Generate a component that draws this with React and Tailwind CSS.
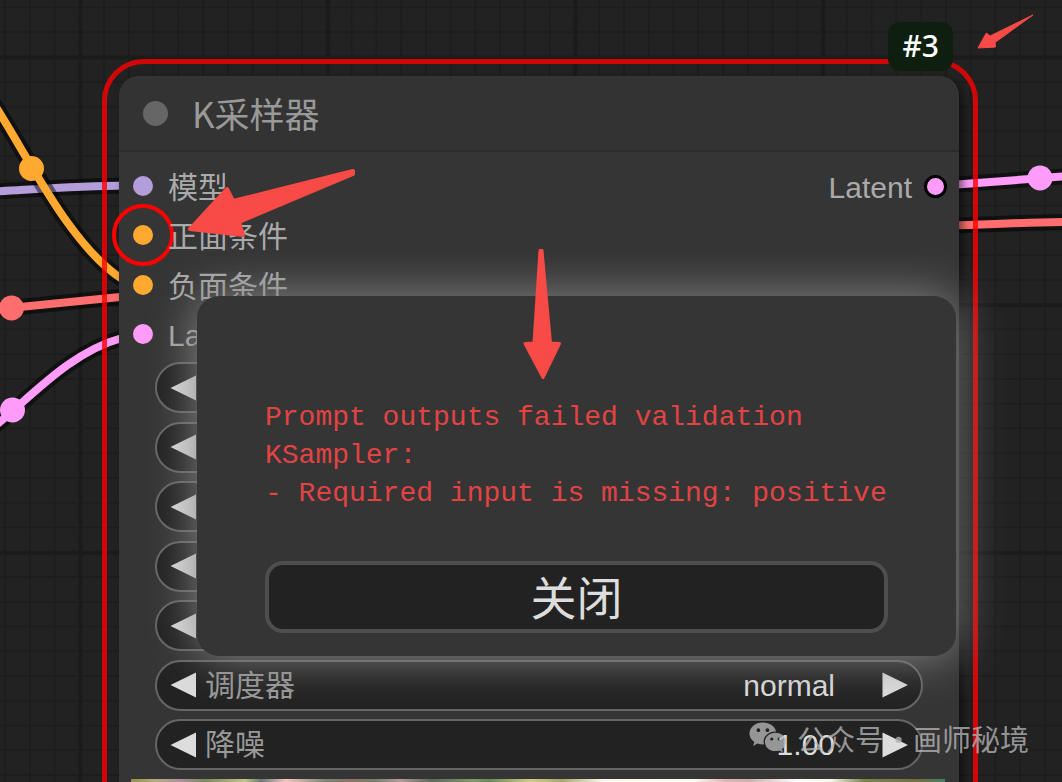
import React from "react";

const SANS = "font-['Liberation_Sans','Noto_Sans_CJK_SC',sans-serif]";
const CJK = "font-['Noto_Sans_CJK_SC',sans-serif]";

function Link({ d, color }) {
  return (
    <g fill="none">
      <path d={d} stroke="#000" strokeOpacity="0.5" strokeWidth="16" />
      <path d={d} stroke={color} strokeWidth="8" />
    </g>
  );
}

function CanvasBackdrop() {
  return (
    <svg className="absolute inset-0 h-full w-full" aria-hidden="true">
      <defs>
        <pattern id="minor" width="24.76" height="24.76" x="4" y="6.5" patternUnits="userSpaceOnUse">
          <path d="M0 1H25M1 0V25" stroke="#1d1d1d" strokeWidth="2" />
        </pattern>
        <pattern id="major" width="247.6" height="247.6" x="78" y="55.5" patternUnits="userSpaceOnUse">
          <path d="M0 2H248M2.5 0V248" stroke="#1b1b1b" strokeWidth="4" />
        </pattern>
      </defs>
      <rect width="100%" height="100%" fill="#222222" />
      <rect width="100%" height="100%" fill="url(#minor)" />
      <rect width="100%" height="100%" fill="url(#major)" />
      <Link d="M-5 191.5C40 189 80 186 125 185.5" color="#b39ddb" />
      <Link d="M-6 309.5L125 296.5" color="#ff6e6e" />
      <Link d="M-6 104C30 160 70 245 122 279" color="#ffa931" />
      <Link d="M-5 426C30 398 70 352 122 338" color="#ff9cf9" />
      <Link d="M950 185L1070 176" color="#ff9cf9" />
      <Link d="M950 225.5C990 224.5 1030 222 1070 222" color="#ff6e6e" />
      <circle cx="31.5" cy="168.5" r="12.5" fill="#ffa931" />
      <circle cx="11.5" cy="308" r="12.5" fill="#ff6e6e" />
      <circle cx="12.5" cy="410" r="12.5" fill="#ff9cf9" />
      <circle cx="1040" cy="178" r="12.5" fill="#ff9cf9" />
    </svg>
  );
}

function Slot({ label, dot, marked }) {
  return (
    <li className="flex flex-1 items-center gap-[15px]">
      <span className={"relative size-5 rounded-full " + dot}>
        {marked && <span className="absolute -inset-[21px] rounded-full border-4 border-[#ff0000]" />}
      </span>
      <span className="relative pt-1 leading-10">{label}</span>
    </li>
  );
}

function Triangle({ d }) {
  return (
    <svg viewBox="0 0 26 26" className="block size-[26px]" fill="#dddddd" aria-hidden="true">
      <path d={d} />
    </svg>
  );
}

function Widget({ label, value }) {
  return (
    <div className="flex h-[51px] items-center rounded-full border-2 border-[#666666] bg-[#222222] px-[13px]">
      <button type="button" aria-label="Previous">
        <Triangle d="M0.5 13L26 0.5V25.5Z" />
      </button>
      <span className="ml-[9px] flex-1 text-[#999999]">{label}</span>
      <span className="mr-[47px] text-[#dddddd]">{value}</span>
      <button type="button" aria-label="Next">
        <Triangle d="M0.5 0.5L26 13L0.5 25.5Z" />
      </button>
    </div>
  );
}

function SamplerNode() {
  return (
    <section className="absolute left-[119px] top-[76px] h-[760px] w-[840px]">
      <div className="h-full rounded-[20px] bg-[#353535] shadow-[4px_4px_8px_rgba(0,0,0,0.5)]">
        <header className="flex h-[76px] items-center gap-6 rounded-t-[20px] border-b-2 border-[#2b2b2b] bg-[#333333] pl-6">
          <span className="size-[25px] rounded-full bg-[#666666]" />
          <h1 className={"text-[35px] leading-[52px] text-[#999999] " + CJK}>K采样器</h1>
        </header>
        <div className={"text-[30px] text-[#aaaaaa] " + SANS}>
          <div className="flex h-[207px] justify-between pl-[14px] pr-3 pt-[9px]">
            <ul className="flex flex-col">
              <Slot label="模型" dot="bg-[#b39ddb]" />
              <Slot label="正面条件" dot="bg-[#ffa931]" marked />
              <Slot label="负面条件" dot="bg-[#ffa931]" />
              <Slot label="Latent" dot="bg-[#ff9cf9]" />
            </ul>
            <div className="flex h-[50px] items-center gap-3">
              <span className="pt-1 leading-10">Latent</span>
              <span className="size-[23px] rounded-full border-[3px] border-black bg-[#ff9cf9]" />
            </div>
          </div>
          <div className="mx-9 mt-[3px] flex h-[408px] flex-col justify-between">
            <Widget />
            <Widget />
            <Widget />
            <Widget />
            <Widget />
            <Widget label="调度器" value="normal" />
            <Widget label="降噪" value="1.00" />
          </div>
          <div className="ml-3 mr-[14px] mt-[9px] h-14 bg-[linear-gradient(90deg,#94904e_0%,#b5ad7c_3%,#b0919b_6%,#7d8860_9%,#c2c487_14%,#6a7a74_16%,#f4c4bb_19%,#7a8573_24%,#8e7164_27%,#77806c_30%,#b79a9c_33%,#5c6b58_37%,#82996a_42%,#6b8a5c_44%,#cfcc80_49%,#a7a76c_53%,#fdf8ec_58%,#fffdf2_69%,#dfb5b4_73%,#cfb0ac_76%,#ffffff_82%,#f7f7e8_86%,#7c8450_90%,#6f6f40_97%,#40805f_100%)]" />
        </div>
      </div>
      <div className="pointer-events-none absolute -left-[17px] -right-[19px] -top-[17px] bottom-0 rounded-[42px] border-[5px] border-[rgba(255,0,0,0.8)]" />
      <span className="absolute -top-[54px] right-[6px] rounded-[12px] bg-[#0f1f0f] px-[14px] pb-[5px] pt-[3px] font-['Noto_Sans',sans-serif] text-[30px] font-medium leading-[41px] text-white">
        #3
      </span>
    </section>
  );
}

function ErrorDialog() {
  return (
    <div
      role="alertdialog"
      aria-labelledby="validation-message"
      className="absolute left-[197px] top-[296px] flex w-[759px] flex-col gap-12 rounded-[22px] bg-[#353535] px-[68px] pb-[23px] pt-[103px] shadow-[0_0_48px_#888888]"
    >
      <p
        id="validation-message"
        className="whitespace-pre font-['Liberation_Mono',monospace] text-[28px] leading-[38px] text-[#e24343]"
      >
        {"Prompt outputs failed validation\nKSampler:\n- Required input is missing: positive"}
      </p>
      <button
        type="button"
        className={
          "h-[72px] rounded-[18px] border-4 border-[#4e4e4e] bg-[#222222] pb-1 text-[46px] leading-[60px] text-[#dddddd] " + CJK
        }
      >
        关闭
      </button>
    </div>
  );
}

function Arrows() {
  return (
    <svg
      className="pointer-events-none absolute inset-0 h-full w-full"
      fill="#f84a46"
      stroke="#f84a46"
      strokeLinejoin="round"
      aria-hidden="true"
    >
      <path strokeWidth="4" d="M190 229L227 189L233 201L353 171L353 174L239 222L243 235Z" />
      <path strokeWidth="3" d="M540 250.5L542 250.5L550.5 343L559.5 343.5L543 377.5L525 343.5L534 343Z" />
      <path strokeWidth="1" d="M978 48L986.3 33L990 36L1033 15L995 42.500L995.5 47Z" />
    </svg>
  );
}

function Watermark() {
  return (
    <div
      className={
        "pointer-events-none absolute bottom-6 right-[33px] flex items-center text-[29px] leading-10 text-[#b4b4b4]/80 " + CJK
      }
    >
      <svg viewBox="0 0 38 32" width="38" height="32" className="mr-[10px]" fill="currentColor" aria-hidden="true">
        <path
          fillRule="evenodd"
          d="M13.8 0.5C6.5 0.5 0.5 5.4 0.5 11.5C0.5 15 2.3 17.8 5.3 19.9L4.2 23.9L8.6 21.5C10.3 22 12 22.4 13.8 22.4L15 22.35C14.7 21.4 14.6 20.5 14.6 19.6C14.6 13.9 19.9 9.5 26.4 9.5L27.1 9.5C26 4.3 20.5 0.5 13.8 0.5ZM9.4 6.3A1.9 1.9 0 1 1 9.4 10.1A1.9 1.9 0 1 1 9.4 6.3ZM18.4 6.3A1.9 1.9 0 1 1 18.4 10.1A1.9 1.9 0 1 1 18.4 6.3Z"
        />
        <path
          fillRule="evenodd"
          d="M26.5 10.8C20.7 10.8 15.9 14.8 15.9 19.9C15.9 25 20.7 29.1 26.5 29.1C27.9 29.1 29.2 28.8 30.5 28.4L34 30.4L33 27.1C35.5 25.3 37.2 22.8 37.2 19.9C37.2 14.8 32.2 10.8 26.5 10.8ZM22.8 15.4A1.6 1.6 0 1 1 22.8 18.6A1.6 1.6 0 1 1 22.8 15.4ZM30.2 15.4A1.6 1.6 0 1 1 30.2 18.6A1.6 1.6 0 1 1 30.2 15.4Z"
        />
      </svg>
      <span>公众号</span>
      <span className="w-[29px] text-center">·</span>
      <span>画师秘境</span>
    </div>
  );
}

export default function App() {
  return (
    <main className="relative h-screen w-full overflow-hidden bg-[#222222]">
      <CanvasBackdrop />
      <SamplerNode />
      <ErrorDialog />
      <Arrows />
      <Watermark />
    </main>
  );
}
